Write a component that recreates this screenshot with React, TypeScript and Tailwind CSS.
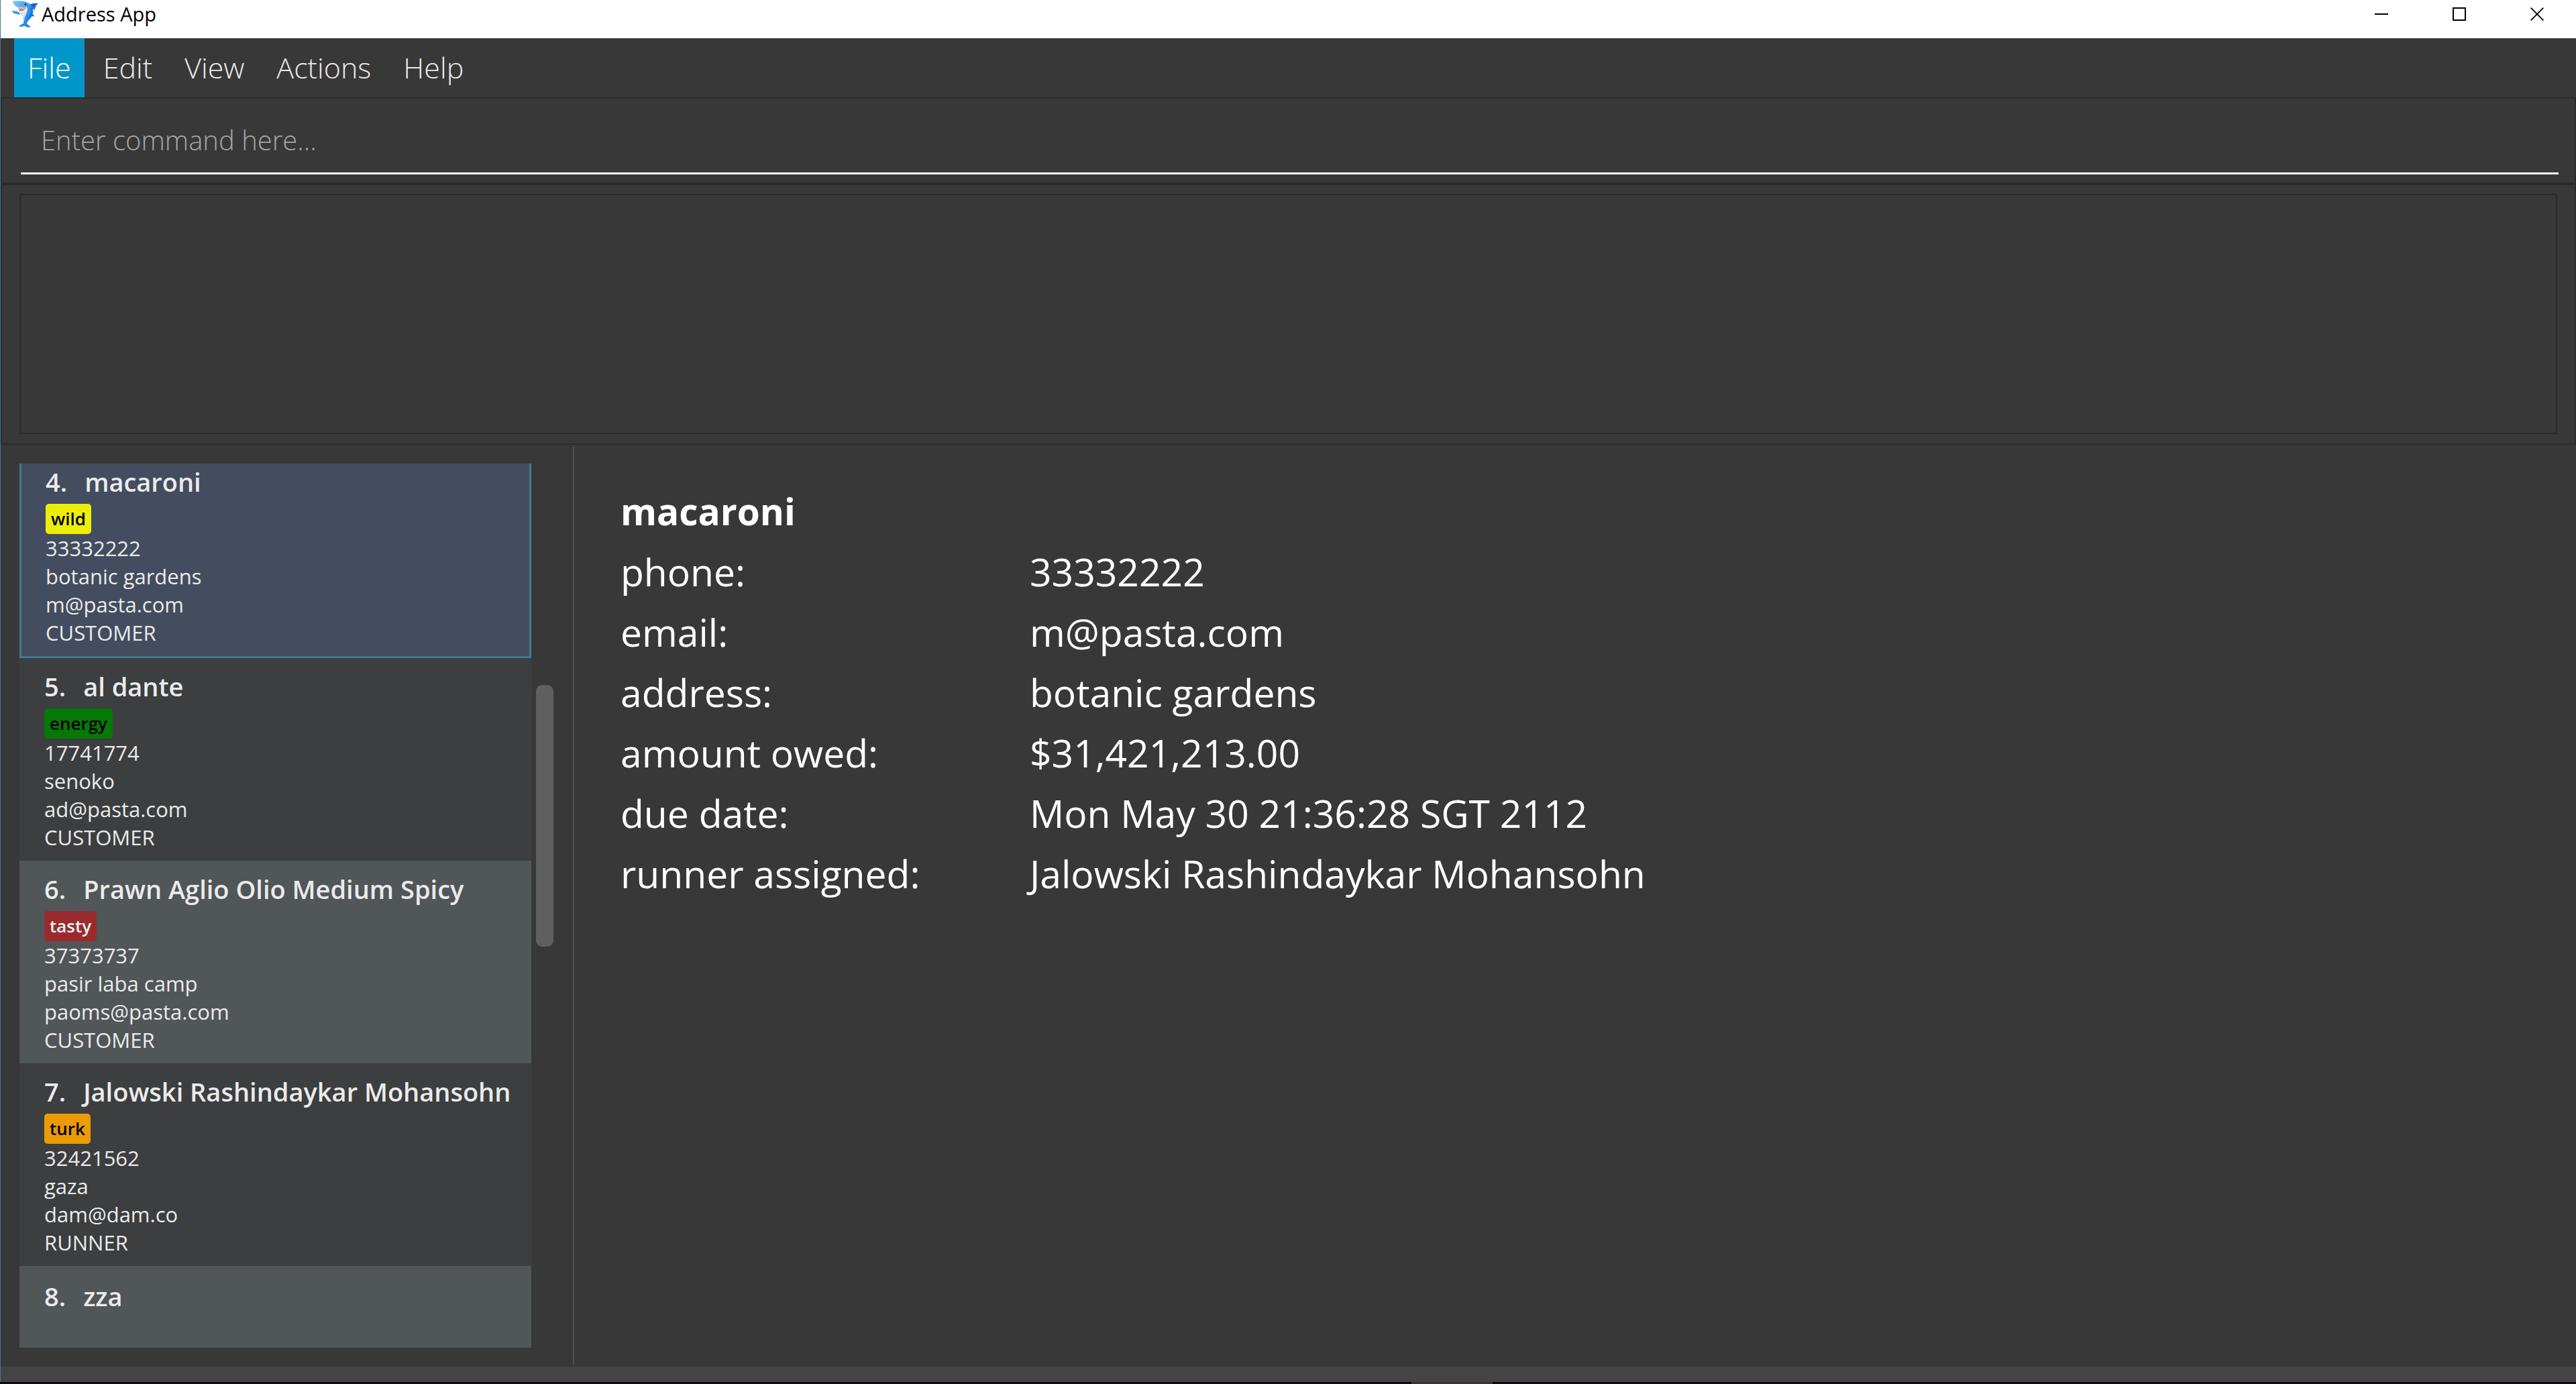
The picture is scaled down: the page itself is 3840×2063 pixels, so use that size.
import type { ReactNode } from "react";

type Contact = {
  id: number;
  name: string;
  tag?: string;
  tagClass?: string;
  lines: string[];
};

const contacts: Contact[] = [
  {
    id: 4,
    name: "macaroni",
    tag: "wild",
    tagClass: "bg-[#eded0c] text-black",
    lines: ["33332222", "botanic gardens", "m@pasta.com", "CUSTOMER"],
  },
  {
    id: 5,
    name: "al dante",
    tag: "energy",
    tagClass: "bg-[#067806] text-black",
    lines: ["17741774", "senoko", "ad@pasta.com", "CUSTOMER"],
  },
  {
    id: 6,
    name: "Prawn Aglio Olio Medium Spicy",
    tag: "tasty",
    tagClass: "bg-[#992b2e] text-[#f0f0f0]",
    lines: ["37373737", "pasir laba camp", "paoms@pasta.com", "CUSTOMER"],
  },
  {
    id: 7,
    name: "Jalowski Rashindaykar Mohansohn",
    tag: "turk",
    tagClass: "bg-[#eb9b06] text-black",
    lines: ["32421562", "gaza", "dam@dam.co", "RUNNER"],
  },
  { id: 8, name: "zza", lines: [] },
];

const details: [string, string][] = [
  ["phone:", "33332222"],
  ["email:", "m@pasta.com"],
  ["address:", "botanic gardens"],
  ["amount owed:", "$31,421,213.00"],
  ["due date:", "Mon May 30 21:36:28 SGT 2112"],
  ["runner assigned:", "Jalowski Rashindaykar Mohansohn"],
];

const menus = ["File", "Edit", "View", "Actions", "Help"];

function SharkIcon() {
  return (
    <svg viewBox="0 0 40 40" className="h-[40px] w-[40px]" aria-hidden="true">
      <defs>
        <linearGradient id="shark-body" x1="0" y1="0" x2="1" y2="1">
          <stop offset="0" stopColor="#8cc8f4" />
          <stop offset="0.45" stopColor="#3b9df2" />
          <stop offset="1" stopColor="#1273e2" />
        </linearGradient>
      </defs>
      <path d="M27 6C31 4 35 3.200 40 4C37 6 35.500 9 35 13L29 12Z" fill="#1d63c4" />
      <path d="M12 18C8 15.500 4 15 0.500 15.500C2.500 17.500 3.500 19.500 8 19.500C9 20.500 11 21 13 20.500Z" fill="#2f93ea" />
      <path d="M3 0C9 0.500 16 -0.500 22 2C28 4.500 32 8 32.500 13C33 20 30.500 25 26 29C24 31 23 33 23 35C25 36 27.500 37.500 28.500 39.500C24 40 21.500 39 19.500 37.500C17 38.500 14 39.500 11 38.500C13 36.500 15 34.500 18 34C19 30 17.500 26 16.500 22C13 19 10.500 15 10 11C6 9 2 6.500 2.500 2Z" fill="url(#shark-body)" />
      <path d="M2.500 1.500C3.500 6 8 9.500 12 10C16 10.500 20 8 23 9C25 13 23 19 20 24C19 27 19.500 29.500 19 31C18.500 28 17.500 25 16.500 22C13 19 10.500 15 10 11C6 9 2.500 6.500 2.500 1.500Z" fill="#dfe7ec" />
      <path d="M10.500 10.500C14.500 12 18.500 10.500 21.500 8.500C21.500 12 18.500 15.500 12.500 15C11.500 13.500 10.800 12 10.500 10.500Z" fill="#b8454e" />
      <path d="M11 11L12.500 13.200L14 11.500L15.500 13.500L17 11L18.500 12.800L20 9.800" fill="none" stroke="#fff" strokeWidth="1" />
      <path d="M28 19C31 19.500 33.500 21 34.500 23.500C31.500 23.500 29.500 22.800 27.500 22Z" fill="#1a6fd8" />
      <path d="M29 9C31 15 29 22 24.500 27" fill="none" stroke="#1d74dc" strokeWidth="2" />
      <circle cx="21" cy="5.500" r="1.300" fill="#10233f" />
    </svg>
  );
}

function WindowButton({ label, children }: { label: string; children: ReactNode }) {
  return (
    <button aria-label={label} className="flex h-[42px] w-[116px] items-center justify-center">
      <svg viewBox="0 0 20 20" className="h-[20px] w-[20px]" fill="none" stroke="#000" strokeWidth="2" aria-hidden="true">
        {children}
      </svg>
    </button>
  );
}

function TitleBar() {
  return (
    <header className="flex h-[57px] items-start bg-white text-black">
      <div className="flex h-[42px] flex-1 items-center gap-[5px] pl-4">
        <SharkIcon />
        <span className="text-[29px] leading-[42px]">Address App</span>
      </div>
      <WindowButton label="Minimize">
        <path d="M0 10H20" />
      </WindowButton>
      <WindowButton label="Maximize">
        <rect x="1" y="1" width="18" height="18" />
      </WindowButton>
      <WindowButton label="Close">
        <path d="M0.700 0.700L19.300 19.300M19.300 0.700L0.700 19.300" strokeWidth="1.800" />
      </WindowButton>
    </header>
  );
}

function ContactCell({ contact, selected }: { contact: Contact; selected: boolean }) {
  const even = contact.id % 2 === 0;
  const last = contact.lines.length === 0;
  const look = selected
    ? "border-x-[3px] border-b-[3px] border-[#3e7b91] bg-[#434d5f] pl-9 pt-[3px]"
    : even
      ? "bg-[#515658] pl-[37px]"
      : "bg-[#3c3e3f] pl-[37px]";
  const spacing = last ? "flex-1 pt-[21px]" : selected ? "pb-[14px]" : "pb-[14px] pt-[18px]";
  return (
    <li className={`${look} ${spacing}`}>
      <h2 className="flex gap-[26px] whitespace-nowrap text-[38px] font-semibold leading-[48px]">
        <span>{contact.id}.</span>
        <span>{contact.name}</span>
      </h2>
      {contact.tag && (
        <span
          className={`mt-[9px] block h-[45px] w-fit rounded-[5px] px-2 text-[26px] font-semibold leading-[45px] ${contact.tagClass}`}
        >
          {contact.tag}
        </span>
      )}
      {contact.lines.map((line) => (
        <p key={line} className="text-[31px] leading-[42px]">
          {line}
        </p>
      ))}
    </li>
  );
}

export default function App() {
  return (
    <div className="flex min-h-screen flex-col bg-[#383838] font-['Open_Sans','Noto_Sans',sans-serif] text-[#ebebeb]">
      <div className="flex flex-1 flex-col border-l border-[#3e7b91]">
        <TitleBar />
        <nav className="flex h-[88px] gap-2 pl-5">
          {menus.map((menu) => (
            <button
              key={menu}
              className={`px-5 text-[43px] font-light ${menu === "File" ? "bg-[#0096c9] text-white" : ""}`}
            >
              {menu}
            </button>
          ))}
        </nav>

        <section className="border-2 border-[#2b2b2b] pb-3 pl-7 pr-6 pt-[13px]">
          <input
            aria-label="Command"
            placeholder="Enter command here..."
            className="block h-[100px] w-full border-b-[3px] border-white bg-transparent pl-[30px] text-[40px] font-light outline-none placeholder:text-[#a6a6a6]"
          />
        </section>
        <section className="border-2 border-[#2b2b2b] px-[26px] pb-[14px] pt-[13px]">
          <textarea
            aria-label="Result"
            readOnly
            className="block h-[358px] w-full resize-none border-2 border-[#2b2b2b] bg-transparent p-4 text-[40px] font-light outline-none"
          />
        </section>

        <main className="flex flex-1">
          <aside className="flex w-[853px] shrink-0 py-7 pl-7 pr-[29px]">
            <ul className="flex min-w-0 flex-1 flex-col">
              {contacts.map((contact) => (
                <ContactCell key={contact.id} contact={contact} selected={contact.id === 4} />
              ))}
            </ul>
            <div className="ml-[7px] w-[26px]">
              <div className="mt-[330px] h-[390px] rounded-[9px] bg-[#5f5f5f]" />
            </div>
          </aside>
          <div className="my-[3px] w-[2px] bg-[#505050]" />
          <article className="flex-1 pl-[69px] pt-[54px] leading-[90px] text-white">
            <h1 className="text-[55px] font-bold leading-[90px]">macaroni</h1>
            <dl className="grid grid-cols-[610px_1fr] text-[57px] leading-[90px]">
              {details.map(([label, value]) => (
                <div key={label} className="contents">
                  <dt>{label}</dt>
                  <dd>{value}</dd>
                </div>
              ))}
            </dl>
          </article>
        </main>
        <footer className="h-[23px] bg-[#444444]" />
      </div>
      <div className="flex h-[3px] bg-[#0d0b0d] pl-[2104px]">
        <div className="w-[121px] bg-[#373435]" />
      </div>
    </div>
  );
}
